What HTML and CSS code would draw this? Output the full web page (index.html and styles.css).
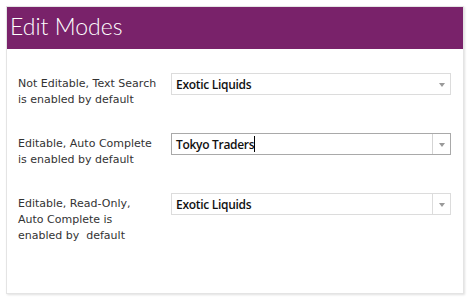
FILE: index.html
```html
<!DOCTYPE html>
<html>
<head>
<meta charset="utf-8">
<link rel="stylesheet" href="styles.css">
</head>
<body>
<div class="card">
  <div class="header">Edit Modes</div>
  <div class="content">
    <div class="row">
      <div class="label">Not Editable, Text Search<br>is enabled by default</div>
      <div class="combo">
        <span class="value">Exotic Liquids</span>
        <span class="btn"><span class="arrow"></span></span>
      </div>
    </div>
    <div class="row">
      <div class="label">Editable, Auto Complete<br>is enabled by default</div>
      <div class="combo focused sep">
        <span class="value">Tokyo Traders<span class="caret"></span></span>
        <span class="btn"><span class="arrow"></span></span>
      </div>
    </div>
    <div class="row">
      <div class="label">Editable, Read-Only,<br>Auto Complete is<br>enabled by&nbsp; default</div>
      <div class="combo sep">
        <span class="value">Exotic Liquids</span>
        <span class="btn"><span class="arrow"></span></span>
      </div>
    </div>
  </div>
</div>
</body>
</html>
```
FILE: styles.css
```css
html, body { margin: 0; padding: 0; background: #fff; }
body { padding: 6px; width: 470px; height: 300px; box-sizing: border-box; }
.card {
  height: 288px;
  width: 458px;
  box-sizing: border-box;
  border: 1px solid #e4e4e4;
  box-shadow: 1px 1px 2px rgba(0,0,0,0.12);
  background: #fff;
}
.header {
  background: #79226a;
  color: #fff;
  height: 42px;
  box-sizing: border-box;
  padding: 4px 0 0 3px;
  font-family: Lato, sans-serif;
  font-weight: 300;
  font-size: 23px;
  line-height: 30px;
}
.content {
  padding: 24px 12px 0 11px;
  display: grid;
  grid-auto-rows: 60px;
}
.row { display: flex; align-items: flex-start; }
.label {
  width: 153px;
  font-family: "DejaVu Sans", Verdana, sans-serif;
  font-size: 11px;
  line-height: 16px;
  color: #333;
  padding-top: 3px;
}
.combo {
  flex: 1;
  height: 22px;
  box-sizing: border-box;
  border: 1px solid #dcdcdc;
  display: flex;
  align-items: center;
  font-family: "Open Sans", sans-serif;
  font-weight: 600;
  font-size: 12px;
  color: #111;
}
.combo.focused { border-color: #a9a9a9; }
.value { flex: 1; padding-left: 4px; display: flex; align-items: center; letter-spacing: -0.3px; }
.caret { display: inline-block; width: 1px; height: 16px; background: #000; }
.btn { width: 17px; height: 100%; display: flex; align-items: center; justify-content: center; }
.sep .btn { border-left: 1px solid #dcdcdc; }
.focused .btn { border-left-color: #d4d4d4; }
.arrow {
  width: 0; height: 0;
  border-left: 3.5px solid transparent;
  border-right: 3.5px solid transparent;
  border-top: 4px solid #9a9a9a;
  margin-top: 1px;
}
```
